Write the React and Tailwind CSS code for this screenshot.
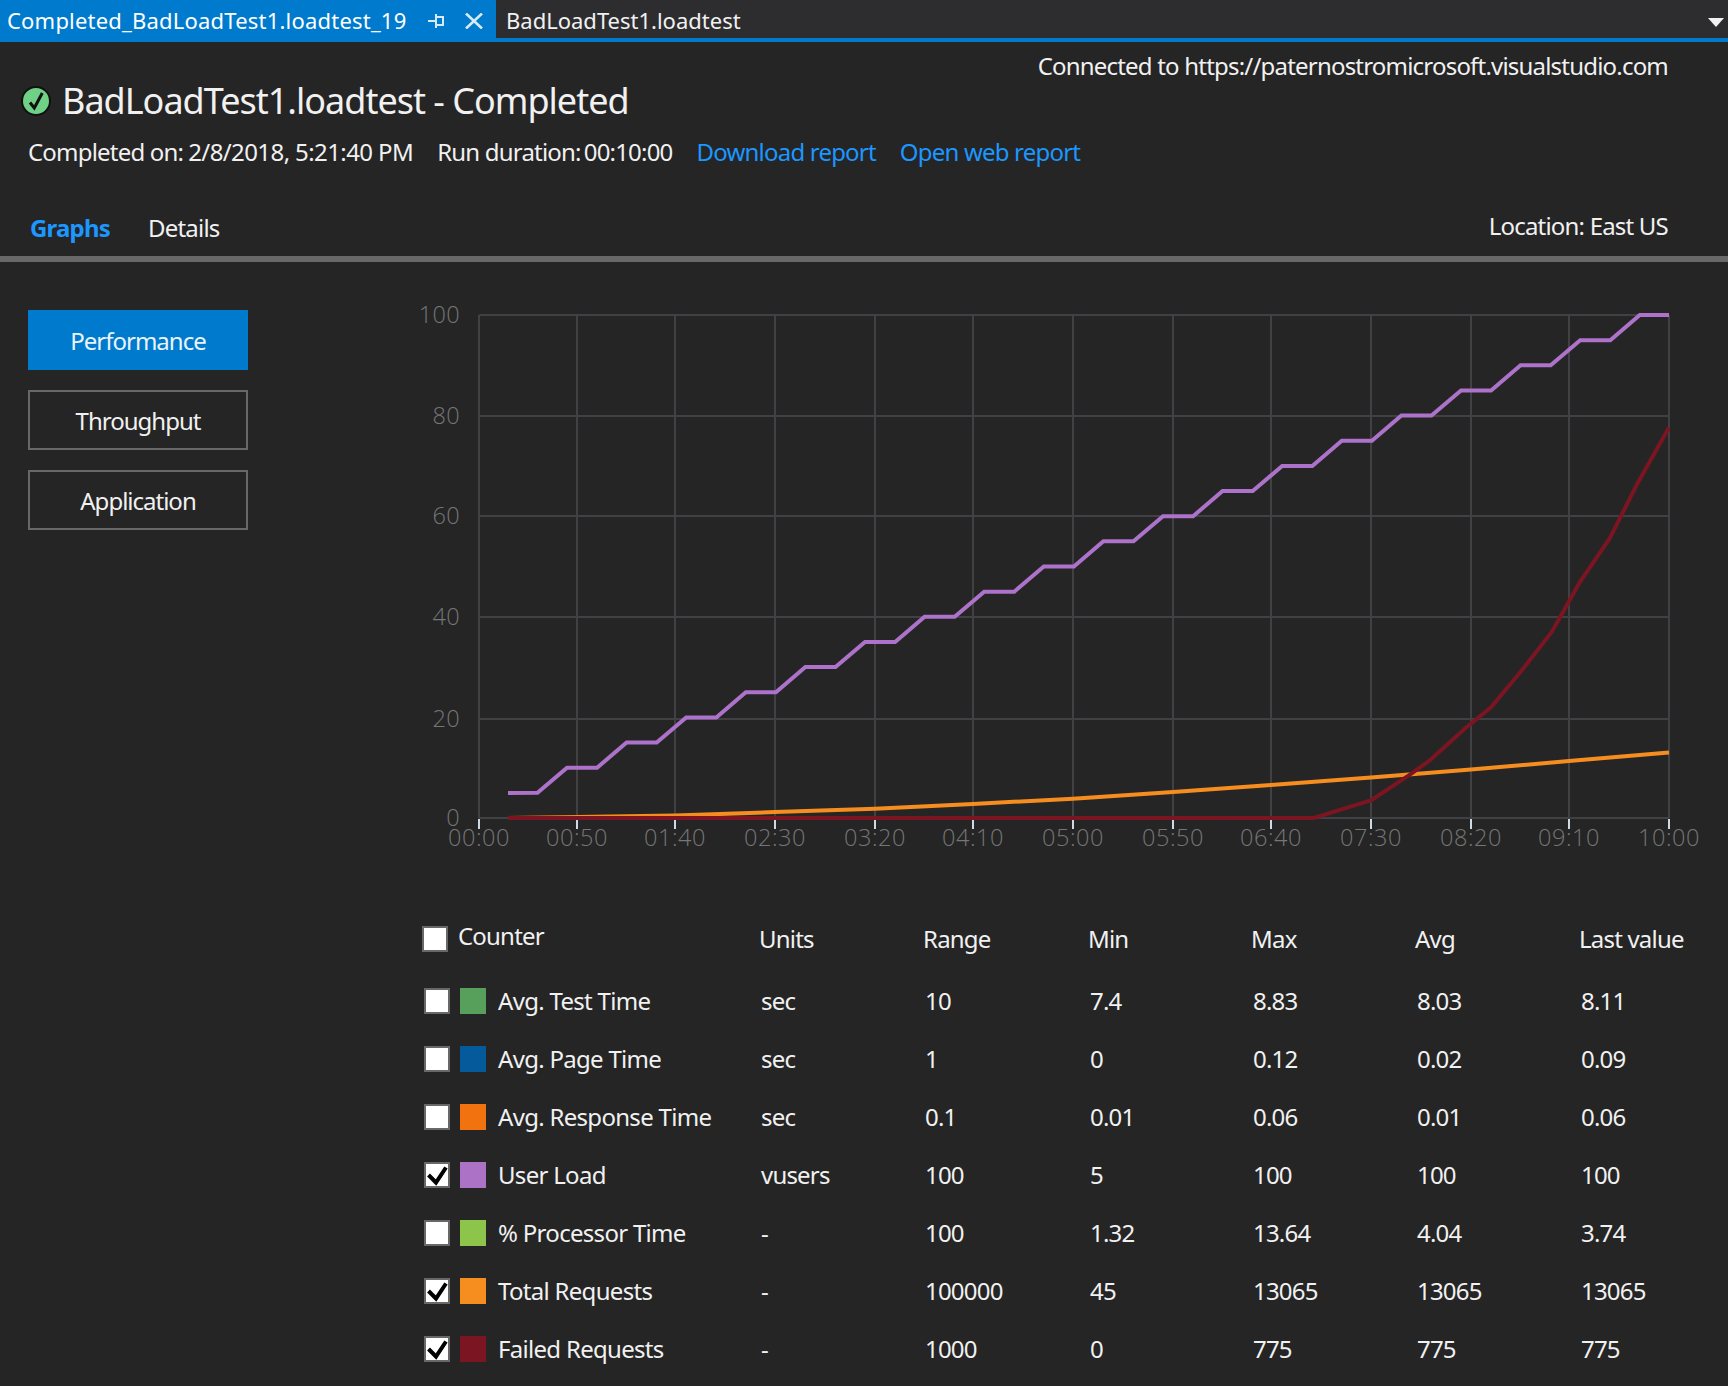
import React from 'react';

const COUNTERS = [
  { name: 'Avg. Test Time', color: 'bg-[#57a05b]', units: 'sec', range: '10', min: '7.4', max: '8.83', avg: '8.03', last: '8.11' },
  { name: 'Avg. Page Time', color: 'bg-[#045a9b]', units: 'sec', range: '1', min: '0', max: '0.12', avg: '0.02', last: '0.09' },
  { name: 'Avg. Response Time', color: 'bg-[#f37210]', units: 'sec', range: '0.1', min: '0.01', max: '0.06', avg: '0.01', last: '0.06' },
  { name: 'User Load', color: 'bg-[#ab72c5]', units: 'vusers', range: '100', min: '5', max: '100', avg: '100', last: '100', checked: true },
  { name: '% Processor Time', color: 'bg-[#8dc54b]', units: '-', range: '100', min: '1.32', max: '13.64', avg: '4.04', last: '3.74' },
  { name: 'Total Requests', color: 'bg-[#f68d1f]', units: '-', range: '100000', min: '45', max: '13065', avg: '13065', last: '13065', checked: true },
  { name: 'Failed Requests', color: 'bg-[#7c1522]', units: '-', range: '1000', min: '0', max: '775', avg: '775', last: '775', checked: true },
];

const X_TICKS = [
  [479, '00:00'], [577, '00:50'], [675, '01:40'], [775, '02:30'], [875, '03:20'], [973, '04:10'],
  [1073, '05:00'], [1173, '05:50'], [1271, '06:40'], [1371, '07:30'], [1471, '08:20'], [1569, '09:10'], [1669, '10:00'],
];
const Y_TICKS = [[100, 315], [80, 416], [60, 516], [40, 617], [20, 719], [0, 818]];

const userLoad = (() => {
  const pts = ['508,793'];
  for (let k = 0; k <= 18; k++) {
    const y = 818 - (5 + k * 5) * 5.03;
    pts.push(`${537.5 + 59.6 * k},${y}`);
    pts.push(`${567 + 59.6 * k},${y - 25.15}`);
  }
  pts.push('1669,315');
  return pts.join(' ');
})();

const totalRequests = '508,818 577,817 675,815.5 775,812 875,808.7 973,804 1073,798.7 1173,792 1271,785 1371,777.6 1471,769.5 1569,761 1669,752.5';
const failedRequests = '508,818 1313.8,818 1344,808.7 1370.8,800.5 1408.9,775.4 1430.5,759.8 1465,728.4 1491,707.3 1521.3,671 1551.6,632.2 1579.7,582.3 1610,537.9 1638,482.4 1669,427.6';

const GRID_COLS = 'grid grid-cols-[337px_164px_165px_163px_164px_164px_1fr] items-center';

function CheckBox({ checked }) {
  return (
    <div className="w-[26px] h-[26px] shrink-0 bg-white border-2 border-[#686868]">
      {checked && (
        <svg viewBox="0 0 22 22" className="w-[22px] h-[22px]">
          <path d="M2.5 11 L10 18.5 L20 3.5" fill="none" stroke="#000" strokeWidth="4" />
        </svg>
      )}
    </div>
  );
}

function Chart() {
  return (
    <svg viewBox="400 290 1328 570" className="w-[1328px] h-[570px] block">
      {Y_TICKS.map(([v, y]) => (
        <g key={v}>
          <line x1="479" x2="1669" y1={y} y2={y} stroke="#404045" strokeWidth="2" />
          <text x="460" y={y + 8} textAnchor="end" fontSize="23.5" letterSpacing="0.3" fill="#767676" fontWeight="300" fontFamily="'Open Sans', sans-serif">{v}</text>
        </g>
      ))}
      {X_TICKS.map(([x, label]) => (
        <g key={label}>
          <line x1={x} x2={x} y1="315" y2="818" stroke="#404045" strokeWidth="2" />
          <line x1={x} x2={x} y1="819" y2="829" stroke="#cdd9e5" strokeWidth="2" />
          <text x={x} y="846" textAnchor="middle" fontSize="23.5" letterSpacing="0.5" fill="#767676" fontWeight="300" fontFamily="'Open Sans', sans-serif">{label}</text>
        </g>
      ))}
      <polyline points={userLoad} fill="none" stroke="#ad72c9" strokeWidth="4" />
      <polyline points={totalRequests} fill="none" stroke="#f68d1f" strokeWidth="4" />
      <polyline points={failedRequests} fill="none" stroke="#7c1522" strokeWidth="4" />
    </svg>
  );
}

export default function App() {
  return (
    <div className="min-h-[1386px] bg-[#252525] text-[#f1f1f1] font-['Noto_Sans',sans-serif] text-[24px] tracking-[-0.8px] whitespace-nowrap overflow-hidden">
      {/* document tabs */}
      <div className="h-[42px] flex bg-[#2d2d30] border-b-4 border-[#007acc] text-[22px] leading-[41px] tracking-normal">
        <div className="w-[496px] h-[42px] bg-[#007acc] flex items-center pl-[7px] pb-[1px] text-white">
          <span className="w-[421px] tracking-[0.2px]">Completed_BadLoadTest1.loadtest_19</span>
          <svg viewBox="0 0 16 14" className="w-[16px] h-[14px]">
            <path d="M0 7h8M8 0v14" fill="none" stroke="#d5ebf8" strokeWidth="2" />
            <rect x="8" y="3" width="7" height="8" fill="none" stroke="#d5ebf8" strokeWidth="2" />
          </svg>
          <svg viewBox="0 0 18 16" className="ml-[21px] w-[18px] h-[16px]">
            <path d="M1 0.5 L17 15.5 M17 0.5 L1 15.5" fill="none" stroke="#d5ebf8" strokeWidth="2.6" />
          </svg>
        </div>
        <div className="pl-[10px] text-[#f1f1f1]">BadLoadTest1.loadtest</div>
        <svg viewBox="0 0 16 9" className="ml-auto mr-[4px] mt-[18px] w-[16px] h-[9px]">
          <path d="M0 0h16L8 9z" fill="#f1f1f1" />
        </svg>
      </div>

      {/* run header */}
      <div className="h-[214px] flex justify-between">
        <div className="pt-[35px] flex-1 min-w-0">
          <div className="h-[48px] flex items-center pl-[21px] gap-[11px] text-[36px] -tracking-[1px]">
            <svg viewBox="0 0 30 30" className="w-[30px] h-[30px]">
              <circle cx="15" cy="15" r="14" fill="#6fd186" stroke="#111" strokeWidth="2" />
              <path d="M9 16.5 L13.3 22 L21.3 7" fill="none" stroke="#111" strokeWidth="3" />
            </svg>
            <span>BadLoadTest1.loadtest - Completed</span>
          </div>
          <div className="h-8 mt-[11px] flex items-center pl-[28px]">
            <span>Completed on:</span>
            <span className="ml-[5px] tracking-[-0.6px]">2/8/2018, 5:21:40 PM</span>
            <span className="ml-[24px]">Run duration:</span>
            <span className="ml-[3px]">00:10:00</span>
            <a className="ml-[24px] text-[#1c97ff]">Download report</a>
            <a className="ml-[24px] text-[#1c97ff]">Open web report</a>
          </div>
          <div className="h-8 mt-[44px] flex items-center pl-[30px]">
            <span className="font-bold text-[#1c97ff]">Graphs</span>
            <span className="ml-[38px]">Details</span>
          </div>
        </div>
        <div className="shrink-0 pt-[8px] pb-[14px] pr-[60px] flex flex-col justify-between items-end">
          <div className="h-8 leading-8">Connected to https://paternostromicrosoft.visualstudio.com</div>
          <div className="h-8 leading-8">Location: East US</div>
        </div>
      </div>
      <div className="h-[6px] bg-[#686868]" />

      <div className="flex pt-[28px] pb-2">
        {/* graph switcher */}
        <div className="w-[400px] shrink-0 pl-[28px] pt-[20px] flex flex-col gap-5">
          <button className="w-[220px] h-[60px] pt-[2px] bg-[#007acc] text-[#eaf3fa] tracking-[-1px]">Performance</button>
          <button className="w-[220px] h-[60px] pt-[2px] border-2 border-[#686868] tracking-[-1px]">Throughput</button>
          <button className="w-[220px] h-[60px] pt-[2px] border-2 border-[#686868] tracking-[-1px]">Application</button>
        </div>

        <div className="flex-1 min-w-0">
          <Chart />
          <div className="mt-[58px] ml-[22px]">
            <div className={`${GRID_COLS} h-[26px] mb-[28px]`}>
              <div className="flex items-center gap-[10px]">
                <CheckBox />
                <span className="mb-[6px]">Counter</span>
              </div>
              <span>Units</span>
              <span>Range</span>
              <span>Min</span>
              <span>Max</span>
              <span>Avg</span>
              <span>Last value</span>
            </div>
            {COUNTERS.map((c) => (
              <div key={c.name} className={`${GRID_COLS} h-[58px] ml-[2px]`}>
                <div className="flex items-center">
                  <CheckBox checked={c.checked} />
                  <div className={`w-[26px] h-[26px] ml-[10px] mr-[12px] ${c.color}`} />
                  <span className="tracking-[-0.7px]">{c.name}</span>
                </div>
                <span>{c.units}</span>
                <span>{c.range}</span>
                <span>{c.min}</span>
                <span>{c.max}</span>
                <span>{c.avg}</span>
                <span>{c.last}</span>
              </div>
            ))}
          </div>
        </div>
      </div>
    </div>
  );
}
